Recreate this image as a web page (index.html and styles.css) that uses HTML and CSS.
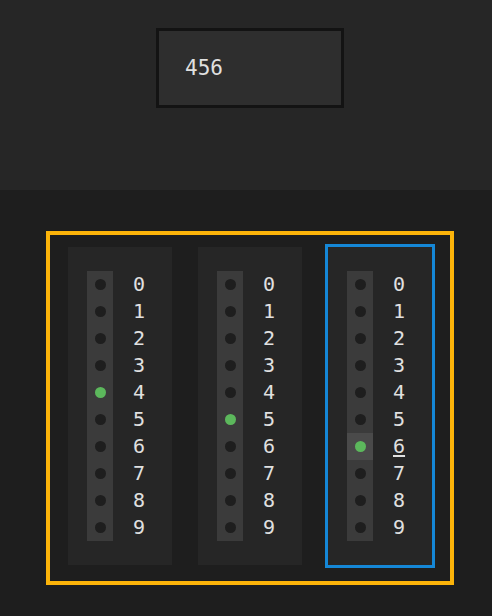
FILE: index.html
```html
<!DOCTYPE html>
<html>
<head>
<meta charset="utf-8">
<link rel="stylesheet" href="styles.css">
</head>
<body>
<div class="top">
  <div class="input">456</div>
</div>
<div class="main">
  <div class="frame">
    <div class="col">
      <div class="row"><span class="cell"><span class="dot"></span></span><span class="num">0</span></div>
      <div class="row"><span class="cell"><span class="dot"></span></span><span class="num">1</span></div>
      <div class="row"><span class="cell"><span class="dot"></span></span><span class="num">2</span></div>
      <div class="row"><span class="cell"><span class="dot"></span></span><span class="num">3</span></div>
      <div class="row"><span class="cell"><span class="dot on"></span></span><span class="num">4</span></div>
      <div class="row"><span class="cell"><span class="dot"></span></span><span class="num">5</span></div>
      <div class="row"><span class="cell"><span class="dot"></span></span><span class="num">6</span></div>
      <div class="row"><span class="cell"><span class="dot"></span></span><span class="num">7</span></div>
      <div class="row"><span class="cell"><span class="dot"></span></span><span class="num">8</span></div>
      <div class="row"><span class="cell"><span class="dot"></span></span><span class="num">9</span></div>
    </div>
    <div class="col">
      <div class="row"><span class="cell"><span class="dot"></span></span><span class="num">0</span></div>
      <div class="row"><span class="cell"><span class="dot"></span></span><span class="num">1</span></div>
      <div class="row"><span class="cell"><span class="dot"></span></span><span class="num">2</span></div>
      <div class="row"><span class="cell"><span class="dot"></span></span><span class="num">3</span></div>
      <div class="row"><span class="cell"><span class="dot"></span></span><span class="num">4</span></div>
      <div class="row"><span class="cell"><span class="dot on"></span></span><span class="num">5</span></div>
      <div class="row"><span class="cell"><span class="dot"></span></span><span class="num">6</span></div>
      <div class="row"><span class="cell"><span class="dot"></span></span><span class="num">7</span></div>
      <div class="row"><span class="cell"><span class="dot"></span></span><span class="num">8</span></div>
      <div class="row"><span class="cell"><span class="dot"></span></span><span class="num">9</span></div>
    </div>
    <div class="col focused">
      <div class="row"><span class="cell"><span class="dot"></span></span><span class="num">0</span></div>
      <div class="row"><span class="cell"><span class="dot"></span></span><span class="num">1</span></div>
      <div class="row"><span class="cell"><span class="dot"></span></span><span class="num">2</span></div>
      <div class="row"><span class="cell"><span class="dot"></span></span><span class="num">3</span></div>
      <div class="row"><span class="cell"><span class="dot"></span></span><span class="num">4</span></div>
      <div class="row"><span class="cell"><span class="dot"></span></span><span class="num">5</span></div>
      <div class="row current"><span class="cell"><span class="dot on"></span></span><span class="num">6</span></div>
      <div class="row"><span class="cell"><span class="dot"></span></span><span class="num">7</span></div>
      <div class="row"><span class="cell"><span class="dot"></span></span><span class="num">8</span></div>
      <div class="row"><span class="cell"><span class="dot"></span></span><span class="num">9</span></div>
    </div>
  </div>
</div>
</body>
</html>
```
FILE: styles.css
```css
html, body {
  margin: 0;
  padding: 0;
  background: #1e1e1e;
  font-family: "DejaVu Sans Mono", monospace;
  color: #e0e0e0;
}
.top {
  height: 190px;
  box-sizing: border-box;
  background: #262626;
  padding: 28px 0 0 8px;
  display: flex;
  justify-content: center;
  align-items: flex-start;
}
.input {
  width: 188px;
  height: 80px;
  box-sizing: border-box;
  border: 3px solid #131313;
  background: #2e2e2e;
  padding-left: 26px;
  display: flex;
  align-items: center;
  font-size: 21px;
  color: #e0e0e0;
}
.main {
  padding: 41px 0 0 8px;
  display: flex;
  justify-content: center;
}
.frame {
  border: 4px solid #fcb40a;
  padding: 12px 18px 16px;
  display: flex;
  gap: 26px;
}
.col {
  width: 104px;
  box-sizing: border-box;
  background: #262626;
  padding: 24px 0 24px 19px;
}
.col.focused {
  outline: 3px solid #1587d6;
}
.row {
  display: flex;
  height: 27px;
  align-items: stretch;
}
.cell {
  width: 26px;
  background: #3b3b3b;
  display: flex;
  align-items: center;
  justify-content: center;
}
.row.current .cell {
  background: #4a4a4a;
}
.dot {
  width: 11px;
  height: 11px;
  border-radius: 50%;
  background: #1e1e1e;
}
.dot.on {
  background: #5cb85c;
}
.num {
  margin-left: 20px;
  font-size: 20px;
  line-height: 27px;
}
.row.current .num {
  text-decoration: underline;
  text-underline-offset: 2px;
}
```
